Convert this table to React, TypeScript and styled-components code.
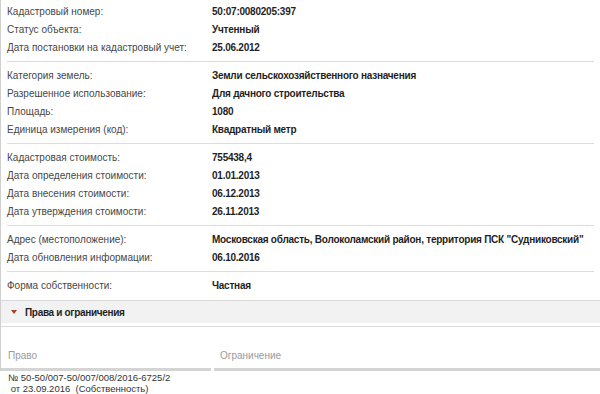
import React from 'react';
import styled, { createGlobalStyle } from 'styled-components';

const GlobalStyle = createGlobalStyle`
  html, body {
    margin: 0;
    padding: 0;
    background: #fff;
  }
  body {
    font-family: "Liberation Sans", Arial, sans-serif;
    font-size: 10px;
    color: #333;
  }
`;

const Page = styled.div`
  width: 600px;
  height: 394px;
  overflow: hidden;
  background: #fff;
`;

const Panel = styled.div`
  border-left: 1px solid #cfcfcf;
  padding-top: 2px;
`;

const Group = styled.div<{ last?: boolean }>`
  margin: 0 6px;
  padding: 4px 0 5px;
  border-bottom: ${(p) => (p.last ? 'none' : '1px solid #dcdcdc')};
  &:first-child {
    padding-top: 0;
  }
`;

const Row = styled.div`
  display: grid;
  grid-template-columns: 205px 1fr;
  height: 18px;
  align-items: center;
`;

const Label = styled.div`
  color: #474747;
  white-space: nowrap;
`;

const Value = styled.div`
  color: #1f1f1f;
  font-weight: bold;
  letter-spacing: -0.24px;
  white-space: nowrap;
`;

const SectionHead = styled.div`
  margin-top: 1px;
  padding-bottom: 3px;
  border-top: 1px solid #d9d9d9;
  border-bottom: 1px solid #d9d9d9;
`;

const SectionBar = styled.div`
  display: flex;
  align-items: center;
  gap: 8px;
  height: 22px;
  padding-left: 10px;
  background: #f2f2f2;
`;

const Caret = styled.span`
  width: 0;
  height: 0;
  border-left: 3px solid transparent;
  border-right: 3px solid transparent;
  border-top: 4px solid #a4452a;
`;

const SectionTitle = styled.span`
  font-weight: bold;
  color: #1f1f1f;
  letter-spacing: -0.32px;
`;

const HeadRow = styled.div`
  display: grid;
  grid-template-columns: 210px 1fr;
  column-gap: 3px;
  margin-top: 23px;
`;

const HeadCell = styled.div<{ first?: boolean }>`
  color: #9a9a9a;
  padding: 0 0 7px ${(p) => (p.first ? '7px' : '6px')};
  border-bottom: 3px solid #d4d4d4;
`;

const BodyCell = styled.div`
  padding: 2px 0 0 8px;
  font-size: 9.5px;
  line-height: 10.5px;
  color: #333;
  white-space: pre;
`;

type Item = [string, string];

const groups: Item[][] = [
  [
    ['Кадастровый номер:', '50:07:0080205:397'],
    ['Статус объекта:', 'Учтенный'],
    ['Дата постановки на кадастровый учет:', '25.06.2012'],
  ],
  [
    ['Категория земель:', 'Земли сельскохозяйственного назначения'],
    ['Разрешенное использование:', 'Для дачного строительства'],
    ['Площадь:', '1080'],
    ['Единица измерения (код):', 'Квадратный метр'],
  ],
  [
    ['Кадастровая стоимость:', '755438,4'],
    ['Дата определения стоимости:', '01.01.2013'],
    ['Дата внесения стоимости:', '06.12.2013'],
    ['Дата утверждения стоимости:', '26.11.2013'],
  ],
  [
    ['Адрес (местоположение):', 'Московская область, Волоколамский район, территория ПСК "Судниковский"'],
    ['Дата обновления информации:', '06.10.2016'],
  ],
  [['Форма собственности:', 'Частная']],
];

const App: React.FC = () => (
  <Page>
    <GlobalStyle />
    <Panel>
      {groups.map((g, i) => (
        <Group key={i} last={i === groups.length - 1}>
          {g.map(([label, value]) => (
            <Row key={label}>
              <Label>{label}</Label>
              <Value>{value}</Value>
            </Row>
          ))}
        </Group>
      ))}
      <SectionHead>
        <SectionBar>
          <Caret />
          <SectionTitle>Права и ограничения</SectionTitle>
        </SectionBar>
      </SectionHead>
      <HeadRow>
        <HeadCell first>Право</HeadCell>
        <HeadCell>Ограничение</HeadCell>
      </HeadRow>
    </Panel>
    <BodyCell>
      {'№ 50-50/007-50/007/008/2016-6725/2\n от 23.09.2016  (Собственность)'}
    </BodyCell>
  </Page>
);

export default App;
